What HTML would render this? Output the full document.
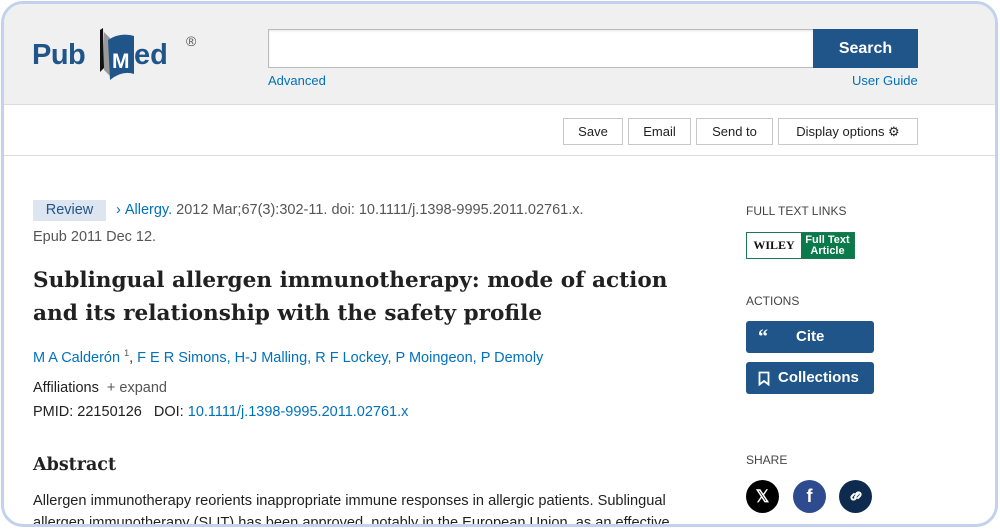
<!DOCTYPE html>
<html><head><meta charset="utf-8"><style>
*{margin:0;padding:0;box-sizing:border-box}
body{width:1000px;height:529px;background:#fff;font-family:"Liberation Sans",sans-serif;position:relative;overflow:hidden;color:#212121}
.frame{position:absolute;left:1px;top:1px;width:997px;height:526px;border:3px solid #c3d2ec;border-radius:22px;overflow:hidden;background:#fff}
.hdr{position:absolute;left:0;top:0;width:100%;height:101px;background:#f0f0f0;border-bottom:1px solid #ddd}
.a{position:absolute;white-space:nowrap}
.lnk{color:#0071bc}
.btn{position:absolute;top:114px;height:27px;border:1px solid #c8c8c8;background:#fff;font-size:13px;line-height:25px;text-align:center;color:#212121}
.serif{font-family:"DejaVu Serif","Liberation Serif",serif;font-weight:bold;color:#212121}
.sm{font-size:12px;color:#444}
.blue{position:absolute;left:742px;width:128px;height:32px;background:#20558a;border-radius:3px;color:#fff;font-weight:bold;font-size:15px;line-height:32px}
.circ{position:absolute;top:476px;width:33px;height:33px;border-radius:50%;color:#fff;text-align:center;font-weight:bold;line-height:33px}
</style></head><body>
<div class="frame">
<div class="hdr"></div>
<svg class="a" style="left:26px;top:20px" width="170" height="62" viewBox="0 0 170 62">
<text x="2" y="40" font-family="Liberation Sans" font-weight="bold" font-size="29" fill="#20558a" letter-spacing="-0.5">Pub</text>
<path d="M70 6 L73 4 L74 44 L70 48 Z" fill="#111"/>
<path d="M74 8 L80 14 L80 52 L74 46 Z" fill="#999"/>
<path d="M78 16 Q90 8 104 12 L104 50 Q92 46 80 56 Z" fill="#20558a"/>
<text x="82" y="44" font-family="Liberation Sans" font-weight="bold" font-size="21" fill="#fff">M</text>
<text x="104" y="40" font-family="Liberation Sans" font-weight="bold" font-size="29" fill="#20558a">ed</text>
<text x="156" y="22" font-family="Liberation Sans" font-size="14" fill="#555">®</text>
</svg>
<div class="a" style="left:264px;top:25px;width:545px;height:39px;background:#fff;border:1px solid #bbb;border-right:none;box-shadow:inset 0 1px 2px rgba(0,0,0,.1)"></div>
<div class="a" style="left:809px;top:25px;width:105px;height:39px;background:#20558a;color:#fff;font-weight:bold;font-size:16px;text-align:center;line-height:39px">Search</div>
<div class="a lnk" style="left:264px;top:69px;font-size:13px">Advanced</div>
<div class="a lnk" style="left:848px;top:69px;font-size:13px">User Guide</div>
<div class="btn" style="left:559px;width:60px">Save</div>
<div class="btn" style="left:624px;width:63px">Email</div>
<div class="btn" style="left:692px;width:77px">Send to</div>
<div class="btn" style="left:774px;width:140px">Display options ⚙</div>
<div class="a" style="left:0;top:151px;width:100%;height:1px;background:#ddd"></div>
<div class="a" style="left:29px;top:196px;width:73px;height:21px;background:#dce5f0;color:#20558a;font-size:14.5px;text-align:center;line-height:21px">Review</div>
<div class="a" style="left:112px;top:198px;font-size:14.5px;color:#555"><span class="lnk">›&nbsp;Allergy.</span> 2012 Mar;67(3):302-11. doi: 10.1111/j.1398-9995.2011.02761.x.</div>
<div class="a" style="left:29px;top:225px;font-size:14.5px;color:#555">Epub 2011 Dec 12.</div>
<div class="a serif" style="left:29px;top:260px;font-size:21.6px;line-height:33px">Sublingual allergen immunotherapy: mode of action<br>and its relationship with the safety profile</div>
<div class="a lnk" style="left:29px;top:344px;font-size:14.5px">M A Calderón <sup style="font-size:9px;color:#555">1</sup><span style="color:#333">,</span> F E R Simons, H-J Malling, R F Lockey, P Moingeon, P Demoly</div>
<div class="a" style="left:29px;top:376px;font-size:14.5px">Affiliations <span style="color:#555">&nbsp;+ expand</span></div>
<div class="a" style="left:29px;top:400px;font-size:14.5px">PMID: 22150126 &nbsp;&nbsp;DOI: <span class="lnk">10.1111/j.1398-9995.2011.02761.x</span></div>
<div class="a serif" style="left:29px;top:451px;font-size:17.5px">Abstract</div>
<div class="a" style="left:29px;top:486px;font-size:14.6px;line-height:22px">Allergen immunotherapy reorients inappropriate immune responses in allergic patients. Sublingual<br>allergen immunotherapy (SLIT) has been approved, notably in the European Union, as an effective</div>
<div class="a sm" style="left:742px;top:200px">FULL TEXT LINKS</div>
<div class="a" style="left:742px;top:228px;width:109px;height:27px;border:1px solid #1b7a56;display:flex">
<div style="width:54px;background:#fff;font-family:'Liberation Serif',serif;font-weight:bold;font-size:12px;line-height:25px;text-align:center;color:#111">WILEY</div>
<div style="flex:1;background:#0b7a4b;color:#fff;font-size:11px;line-height:11px;text-align:center;padding-top:2px;font-weight:bold">Full Text<br>Article</div></div>
<div class="a sm" style="left:742px;top:290px">ACTIONS</div>
<div class="blue" style="top:317px"><span style="position:absolute;left:12px;font-family:'Liberation Serif',serif;font-size:20px">“</span><span style="position:absolute;left:50px">Cite</span></div>
<div class="blue" style="top:358px"><svg style="position:absolute;left:12px;top:9px" width="12" height="15" viewBox="0 0 12 15"><path d="M1.5 1.5h9v12l-4.5-3.5-4.5 3.5z" fill="none" stroke="#fff" stroke-width="1.8"/></svg><span style="position:absolute;left:32px">Collections</span></div>
<div class="a sm" style="left:742px;top:449px">SHARE</div>
<div class="circ" style="left:742px;background:#000;font-size:17px">𝕏</div>
<div class="circ" style="left:789px;background:#2e4b8f;font-size:18px;font-family:'Liberation Sans'">f</div>
<div class="circ" style="left:835px;background:#0f2a4f"><svg width="16" height="16" viewBox="0 0 16 16" style="margin-top:8px"><path d="M7 9l3-3M6 6l-2 2a2 2 0 003 3l1-1M10 10l2-2a2 2 0 00-3-3l-1 1" fill="none" stroke="#fff" stroke-width="2" stroke-linecap="round"/></svg></div>
</div>
</body></html>
